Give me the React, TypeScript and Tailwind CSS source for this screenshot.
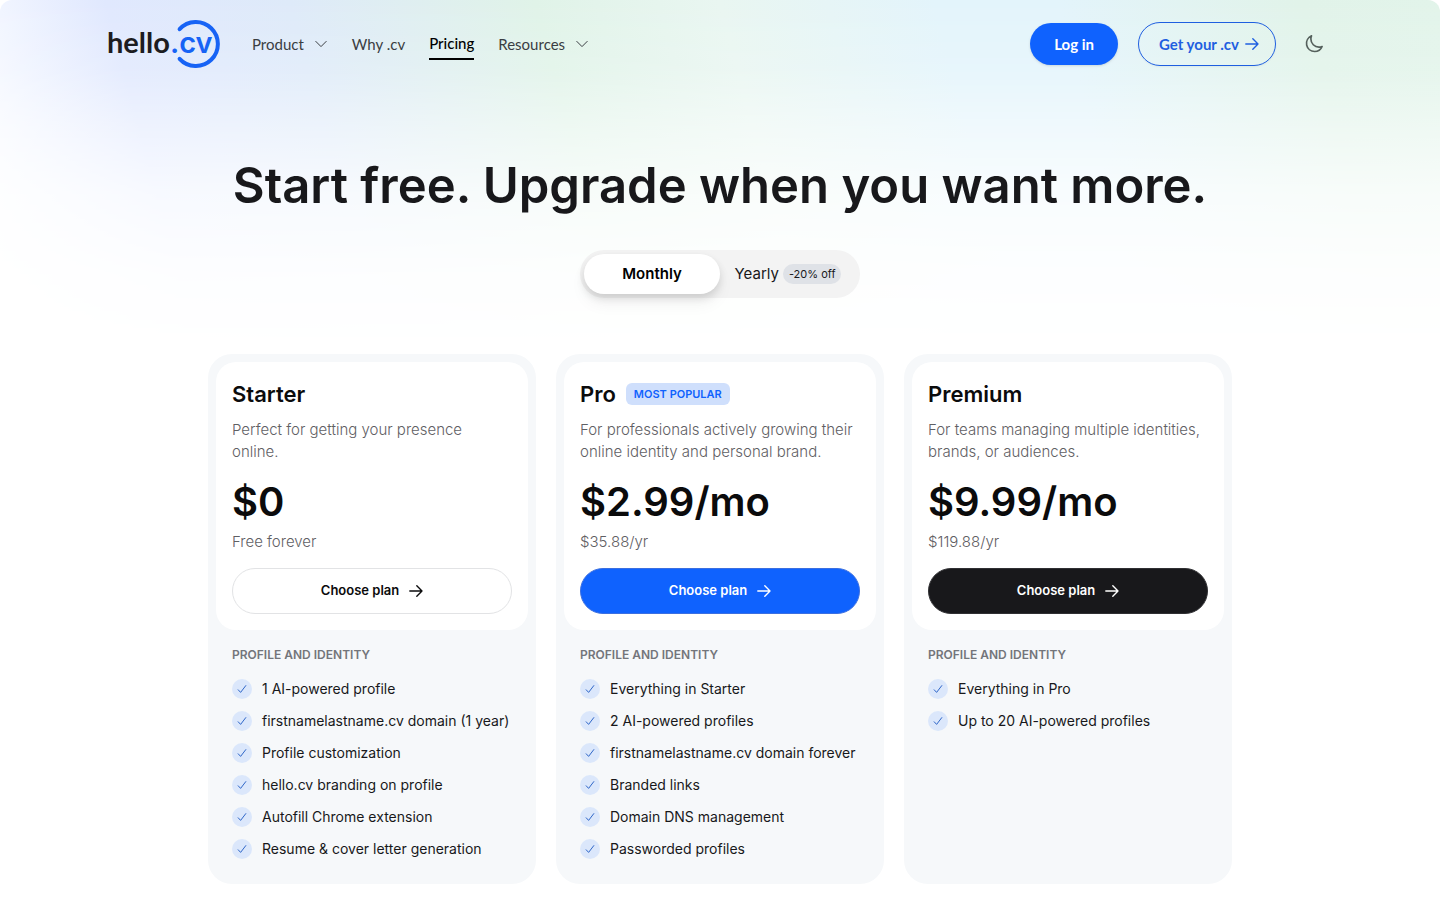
const NAV = "font-['Lato','Liberation_Sans',sans-serif]";

function Chevron() {
  return (
    <svg viewBox="0 0 14 8" className="h-2 w-3.5" fill="none" stroke="currentColor" strokeWidth="1" strokeLinecap="round" strokeLinejoin="round" aria-hidden="true">
      <path d="M1.8 1.4 7 6.6 12.2 1.4" />
    </svg>
  );
}

function Arrow() {
  return (
    <svg viewBox="0 0 14 14" className="size-3.5 shrink-0" fill="none" stroke="currentColor" strokeWidth="1.4" strokeLinecap="round" strokeLinejoin="round" aria-hidden="true">
      <path d="M0.8 7h12.2M7.8 1.8 13 7l-5.2 5.2" />
    </svg>
  );
}

function Check() {
  return (
    <span className="flex size-5 shrink-0 items-center justify-center rounded-full bg-[#dbe7fb] text-[#2f66c8]">
      <svg viewBox="0 0 10 10" className="size-2.5" fill="none" stroke="currentColor" strokeWidth="1" strokeLinecap="round" strokeLinejoin="round" aria-hidden="true">
        <path d="M1.2 5.8 3.6 8.4 8.8 1.6" />
      </svg>
    </span>
  );
}

function Logo() {
  return (
    <a href="#home" aria-label="hello.cv" className="block shrink-0">
      <svg viewBox="0 0 112 48" className="h-12 w-28 overflow-visible" aria-hidden="true">
        <text x="-1" y="33" fontSize="29" fontWeight="700" className={NAV} fill="#1c1c21">hello</text>
        <text x="62" y="33" fontSize="29" fontWeight="600" className="font-['Inter','Liberation_Sans',sans-serif]" fill="#1763f5">.cv</text>
        <path d="M71.6 9.2A22 22 0 1 1 71.6 38.8" fill="none" stroke="#1763f5" strokeWidth="4" strokeLinecap="round" />
      </svg>
    </a>
  );
}

type Plan = {
  name: string;
  badge?: string;
  description: string;
  price: string;
  note: string;
  button: string;
  features: string[];
};

const plans: Plan[] = [
  {
    name: "Starter",
    description: "Perfect for getting your presence online.",
    price: "$0",
    note: "Free forever",
    button: "border-[#e2e3e5] bg-white text-[#0b0b0c]",
    features: [
      "1 AI-powered profile",
      "firstnamelastname.cv domain (1 year)",
      "Profile customization",
      "hello.cv branding on profile",
      "Autofill Chrome extension",
      "Resume & cover letter generation",
    ],
  },
  {
    name: "Pro",
    badge: "Most popular",
    description: "For professionals actively growing their online identity and personal brand.",
    price: "$2.99/mo",
    note: "$35.88/yr",
    button: "border-[#3b6fe0] bg-[#0f62fe] text-white",
    features: [
      "Everything in Starter",
      "2 AI-powered profiles",
      "firstnamelastname.cv domain forever",
      "Branded links",
      "Domain DNS management",
      "Passworded profiles",
    ],
  },
  {
    name: "Premium",
    description: "For teams managing multiple identities, brands, or audiences.",
    price: "$9.99/mo",
    note: "$119.88/yr",
    button: "border-[#303033] bg-[#18181b] text-white",
    features: ["Everything in Pro", "Up to 20 AI-powered profiles"],
  },
];

function PlanCard({ plan }: { plan: Plan }) {
  return (
    <article className="rounded-3xl bg-[#f6f8fa] p-2">
      <div className="rounded-[20px] bg-white p-4">
        <div className="flex h-8 items-center gap-2.5">
          <h2 className="text-[22px] leading-8 font-semibold text-[#0b0b0c]">{plan.name}</h2>
          {plan.badge && (
            <span className="rounded-md bg-[#cfdffc] px-2 text-[11px] leading-[22px] font-semibold text-[#0f62fe] uppercase">{plan.badge}</span>
          )}
        </div>
        <p className="mt-[9px] min-h-11 text-[15px] leading-[22px] font-light text-[#5f6064]">{plan.description}</p>
        <p className="mt-[15px] text-[40px] leading-12 font-semibold text-[#0b0b0c]">{plan.price}</p>
        <p className="mt-[5px] text-[15px] leading-[22px] font-light text-[#5f6064]">{plan.note}</p>
        <button type="button" className={`mt-[15px] flex h-[46px] w-full items-center justify-center gap-2.5 rounded-full border text-[13px] font-semibold ${plan.button}`}>
          Choose plan
          <Arrow />
        </button>
      </div>
      <div className="p-4">
        <h3 className="text-xs leading-[18px] font-semibold text-[#73757a] uppercase">Profile and identity</h3>
        <ul className="mt-3.5 flex flex-col gap-2.5">
          {plan.features.map((f) => (
            <li key={f} className="flex items-center gap-2.5 text-sm leading-[22px] text-[#18181b]">
              <Check />
              <span>{f}</span>
            </li>
          ))}
        </ul>
      </div>
    </article>
  );
}

export default function App() {
  return (
    <div className="relative min-h-screen bg-white pb-4 font-['Inter','Liberation_Sans',sans-serif]">
      <div aria-hidden="true" className="absolute inset-x-0 top-0 h-88 overflow-hidden rounded-t-xl">
        <div className="size-full bg-[linear-gradient(75deg,#ffffff_0%,#f1f5ff_6%,#e0e8fe_13%,#deeaf9_25%,#e0f3e8_41%,#e9f6f1_53%,#e3f4fb_67%,#e3f4fb_75%,#e1f3e9_91%,#e2f4ea_100%)] mask-[linear-gradient(to_bottom,black_0%,rgb(0_0_0/0.85)_20%,rgb(0_0_0/0.55)_36%,rgb(0_0_0/0.25)_55%,rgb(0_0_0/0.07)_78%,transparent_100%)]" />
      </div>

      <header className={`relative flex h-22 items-center justify-between px-27 text-[15px] ${NAV}`}>
        <div className="flex items-center gap-8">
          <Logo />
          <nav className="flex items-center gap-6 text-[#3a3d42]">
            <button type="button" className="flex items-center gap-2.5">
              Product <Chevron />
            </button>
            <a href="#why">Why .cv</a>
            <a href="#pricing" aria-current="page" className="border-b-2 border-black pt-1 pb-1 font-medium text-black">Pricing</a>
            <button type="button" className="flex items-center gap-2.5">
              Resources <Chevron />
            </button>
          </nav>
        </div>
        <div className="flex items-center gap-5">
          <a href="#login" className="flex h-[42px] items-center rounded-full bg-[#0f62fe] px-6 font-bold text-white shadow-sm">Log in</a>
          <a href="#get" className="flex h-11 items-center gap-1.5 rounded-full border border-[#1f5fe0] pr-4 pl-5 font-bold text-[#1f5fe0] shadow-xs">
            Get your .cv <Arrow />
          </a>
          <button type="button" aria-label="Switch to dark theme" className="flex size-9 items-center justify-center text-[#55605c]">
            <svg viewBox="0 0 24 24" className="size-5" fill="none" stroke="currentColor" strokeWidth="2" strokeLinejoin="round" strokeLinecap="round" aria-hidden="true">
              <path d="M21.75 15A9.7 9.7 0 0 1 18 15.75 9.75 9.75 0 0 1 8.25 6c0-1.33.27-2.6.75-3.75A9.75 9.75 0 0 0 12.75 21a9.75 9.75 0 0 0 9-6Z" />
            </svg>
          </button>
        </div>
      </header>

      <main className="relative flex flex-col items-center">
        <h1 className="mt-16 text-center text-[49px] leading-[68px] font-semibold text-[#18181b]">Start free. Upgrade when you want more.</h1>

        <div role="group" aria-label="Billing period" className="mt-[30px] grid h-12 w-70 grid-cols-2 rounded-full bg-[#f3f3f3] p-1">
          <button type="button" aria-pressed="true" className="rounded-full bg-white text-[15px] font-semibold text-black shadow-[0_4px_8px_rgb(0_0_0/0.12),0_10px_16px_rgb(0_0_0/0.05)]">Monthly</button>
          <button type="button" aria-pressed="false" className="flex items-center justify-center gap-1 text-[15px] text-[#18181b]">
            Yearly
            <span className="rounded-full bg-[#dfe2e7] px-1.5 text-[11px] leading-5">-20% off</span>
          </button>
        </div>

        <section aria-label="Plans" className="mt-14 grid w-full max-w-[1024px] grid-cols-3 gap-5">
          {plans.map((p) => (
            <PlanCard key={p.name} plan={p} />
          ))}
        </section>
      </main>
    </div>
  );
}
